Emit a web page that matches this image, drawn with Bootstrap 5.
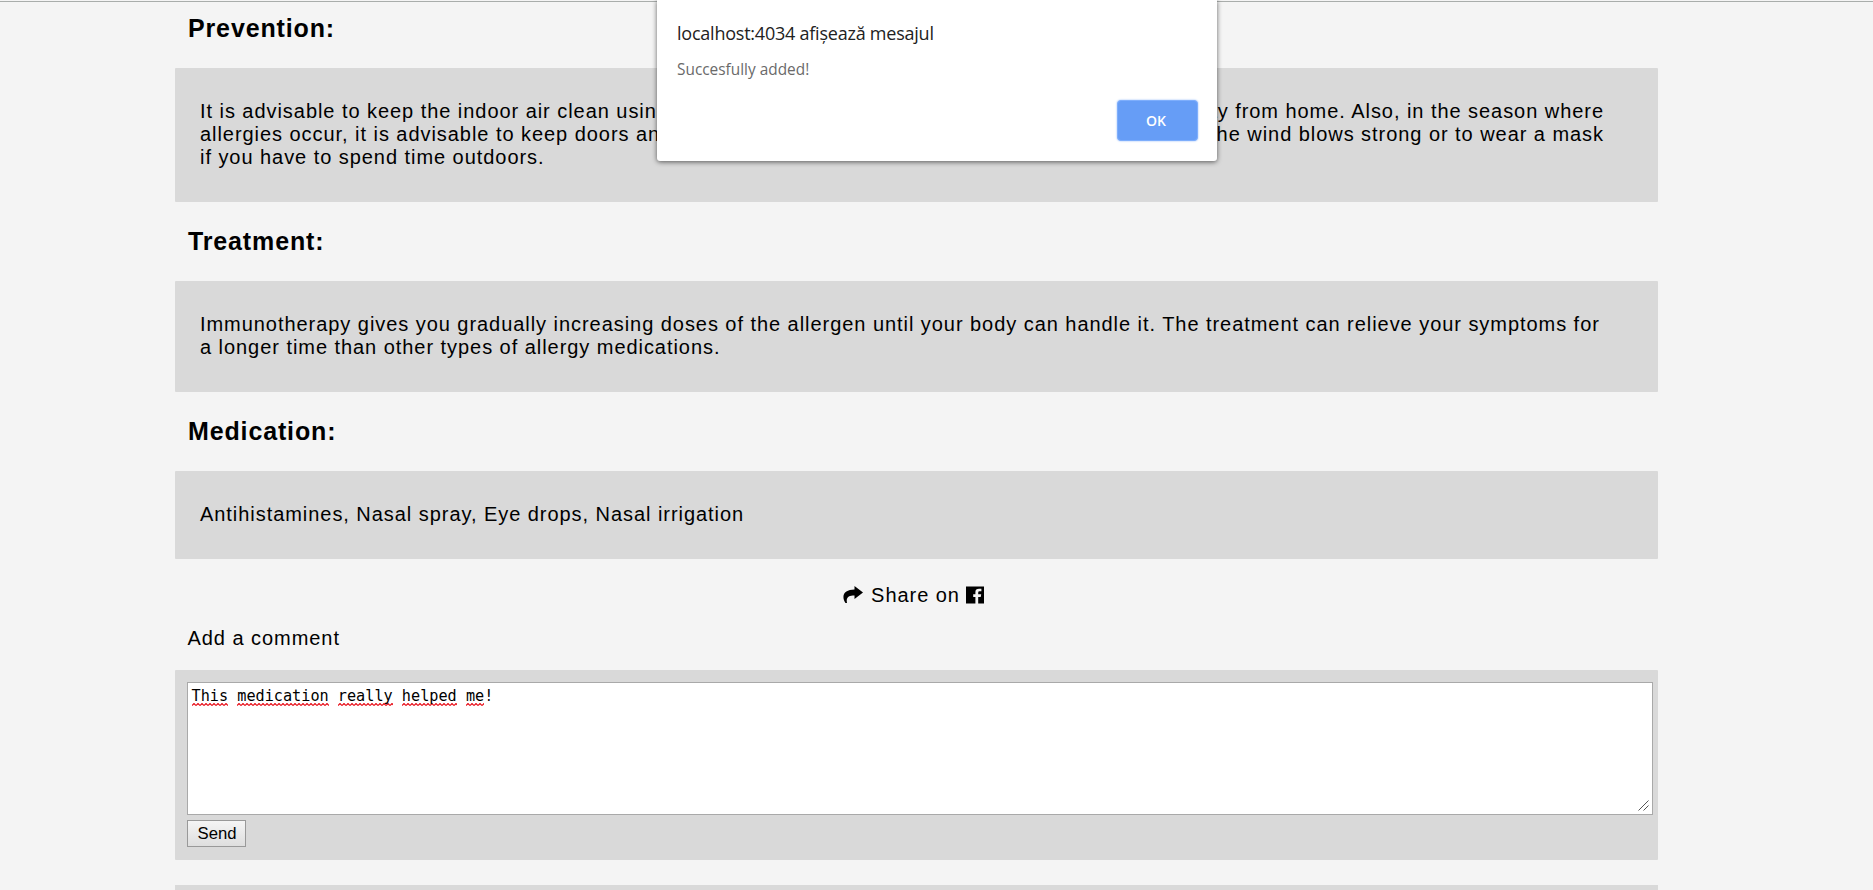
<!DOCTYPE html>
<html lang="en">
<head>
<meta charset="utf-8">
<title>Allergies</title>
<link href="https://cdn.jsdelivr.net/npm/bootstrap@5.3.0/dist/css/bootstrap.min.css" rel="stylesheet">
<style>
html,body{height:100%;overflow:hidden}
body{background:#f4f4f4;color:#000;font:20px/23px "Liberation Sans",Arial,sans-serif;letter-spacing:.95px}
.topline{height:2px;border-bottom:1px solid #a9adab}
.page{width:1483px;margin-left:175px}
.title{font-size:25px;line-height:29px;font-weight:700;letter-spacing:.86px;padding:0 13px;margin:0}
.panel{background:#d9d9d9;border-radius:1px;padding:32px 54px 33px 25px;white-space:nowrap}
.t1{margin-top:12px;margin-bottom:25px}
.t2{margin-top:25px;margin-bottom:25px}
.share{margin-top:25px;height:23px;padding-right:6px}
.share svg{margin-bottom:2px}
.share-text{margin:0 6px 0 8px}
.label-line{margin-top:20px;margin-bottom:20px;padding-left:12.5px}
.comment{background:#d9d9d9;border-radius:1px;height:190px;padding:12px 5px 0 12px}
.editor{height:133px;background:#fff;border:1px solid #a9a9a9;padding:3px 3.5px;font:15.2px/20px "DejaVu Sans Mono",monospace;letter-spacing:0}
.editor u{text-decoration:none;padding-bottom:1px;background:url("data:image/svg+xml,%3Csvg xmlns='http://www.w3.org/2000/svg' width='4' height='3'%3E%3Cpath d='M0 2.5L2 .5L4 2.5' fill='none' stroke='%23e8101a' stroke-width='1.2'/%3E%3C/svg%3E") repeat-x left bottom}
.grip{right:3px;bottom:3px}
.send{display:block;width:59px;height:27px;margin-top:5px;padding:0 0 0 1px;border:1px solid #999;background:linear-gradient(#f5f5f5,#dedede);font:16.7px/24px "Liberation Sans",Arial,sans-serif;color:#000}
.next{background:#d9d9d9;height:40px;margin-top:25px}
.dialog-box{left:657px;top:0;width:560px;height:161px;background:#fff;border-radius:0 0 3px 3px;box-shadow:0 1px 5px rgba(0,0,0,.6);padding:20px 19.5px 20px 20px;font-family:"Open Sans","Noto Sans",sans-serif;letter-spacing:0}
.origin{font-size:18px;line-height:26px;letter-spacing:-.23px;color:#222;white-space:nowrap}
.message{font-size:15.4px;line-height:22px;margin-top:13px;color:#6a6a6a;white-space:nowrap}
.ok{width:81px;height:41px;border:1px solid #7eaefc;border-radius:4px;background:#669df6;color:#fff;font-size:14px;font-weight:600;padding:0 2px 0 0;margin-top:auto;box-shadow:0 0 2px #8ab4f8}
</style>
</head>
<body>
<div class="topline"></div>
<main class="page">
  <h2 class="title t1">Prevention:</h2>
  <div class="panel">
    <div class="d-flex justify-content-between"><span>It is advisable to keep the indoor air clean using air</span><span>away from home. Also, in the season where</span></div>
    <div class="d-flex justify-content-between"><span>allergies occur, it is advisable to keep doors and</span><span>the wind blows strong or to wear a mask</span></div>
    <div>if you have to spend time outdoors.</div>
  </div>
  <h2 class="title t2">Treatment:</h2>
  <div class="panel">Immunotherapy gives you gradually increasing doses of the allergen until your body can handle it. The treatment can relieve your symptoms for<br>a longer time than other types of allergy medications.</div>
  <h2 class="title t2">Medication:</h2>
  <div class="panel">Antihistamines, Nasal spray, Eye drops, Nasal irrigation</div>
  <div class="share d-flex justify-content-center align-items-center">
    <svg width="20" height="18" viewBox="0 0 20 18"><path d="M11.500 0L20 6.500L11.500 13V9.500C6 9.500 2.800 11 4 17H2.500C-2.500 9 2 3.500 11.500 3.500Z"/></svg>
    <span class="share-text">Share on</span>
    <svg width="18" height="18" viewBox="0 0 18 18"><path d="M0 .5H18V17.500H12.200V11H14.700L15.200 8.200H12.200V6.500Q12.200 5.200 13.500 5.200H15.400V2.700H13Q9.400 2.700 9.400 6V8.200H7.200V11H9.400V17.500H0Z"/></svg>
  </div>
  <div class="label-line">Add a comment</div>
  <div class="comment">
    <div class="editor position-relative"><u>This</u> <u>medication</u> <u>really</u> <u>helped</u> <u>me</u>!
      <svg class="grip position-absolute" width="11" height="11" viewBox="0 0 11 11" stroke="#555" fill="none"><path d="M.5 10.500L10.500 .5M5.500 10.500L10.500 5.500"/></svg>
    </div>
    <button class="send">Send</button>
  </div>
  <div class="next"></div>
</main>
<div class="dialog-box position-absolute d-flex flex-column" role="dialog">
  <div class="origin">localhost:4034 afișează mesajul</div>
  <div class="message">Succesfully added!</div>
  <button class="ok align-self-end">OK</button>
</div>
<script src="https://cdn.jsdelivr.net/npm/bootstrap@5.3.0/dist/js/bootstrap.bundle.min.js"></script>
</body>
</html>
